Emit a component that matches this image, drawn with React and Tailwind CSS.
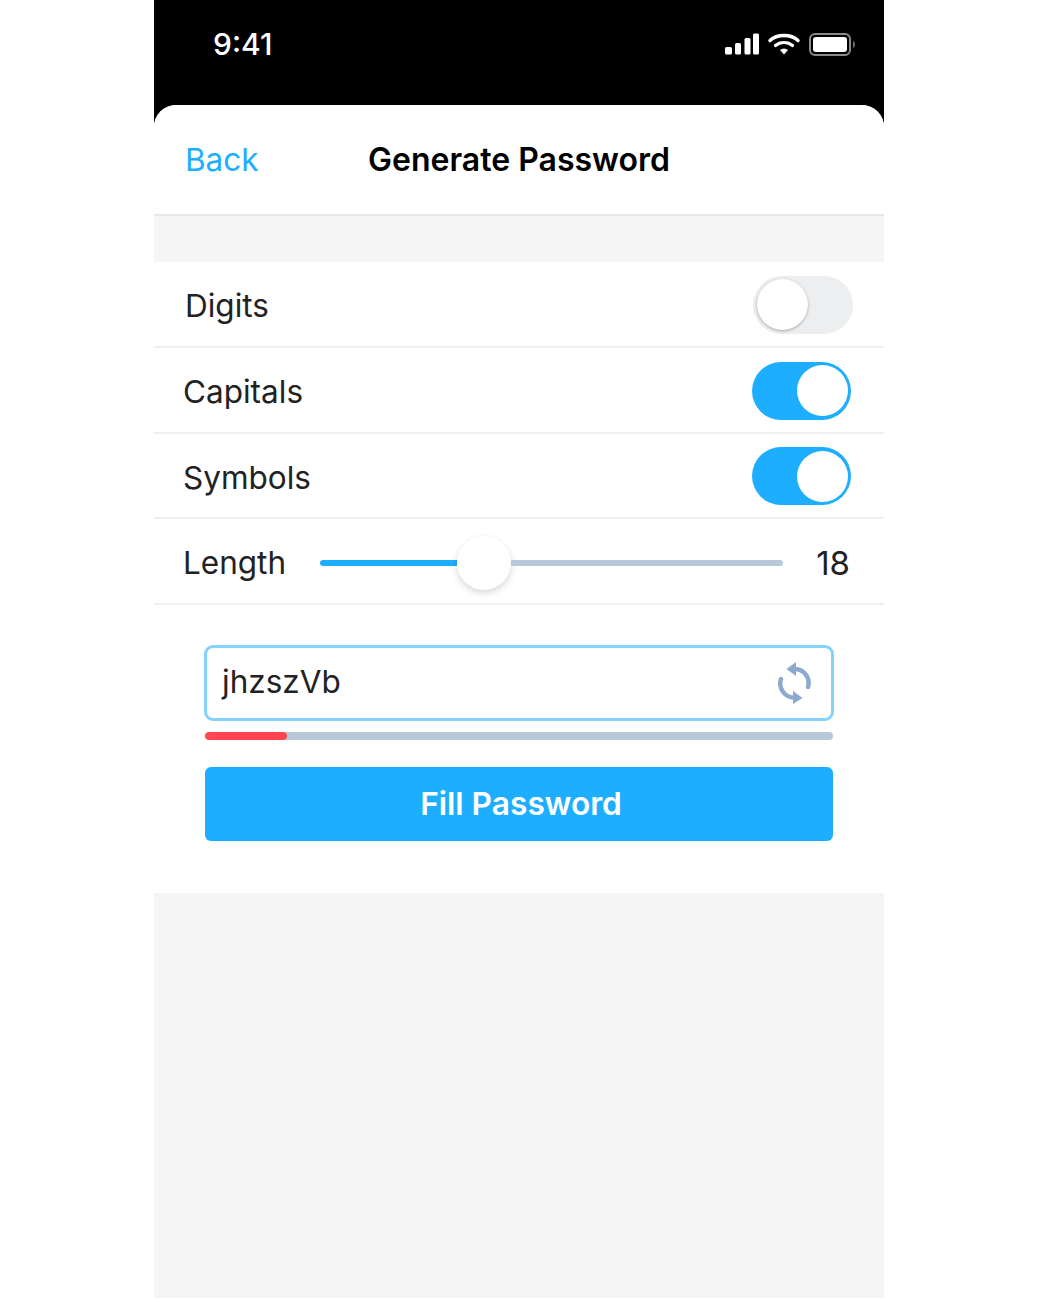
import React from "react";

const font = { fontFamily: '"Inter", "Liberation Sans", sans-serif' };

function StatusIcons() {
  return (
    <svg width="132" height="24" viewBox="0 0 132 24" fill="none">
      <rect x="0" y="14" width="7" height="7.5" rx="1.5" fill="#fff" />
      <rect x="10" y="10" width="6" height="11.5" rx="1.5" fill="#fff" />
      <rect x="19.5" y="5" width="6" height="16.5" rx="1.5" fill="#fff" />
      <rect x="28" y="0.5" width="6" height="21" rx="1.5" fill="#fff" />
      <path d="M45 7.5 C52 0.8 66 0.8 73 7.5" stroke="#fff" strokeWidth="3.4" strokeLinecap="round" />
      <path d="M50.5 12.5 C55 8.5 63 8.5 67.5 12.5" stroke="#fff" strokeWidth="3.2" strokeLinecap="round" />
      <path d="M55 17 L59 21.5 L63 17 C60.5 15 57.5 15 55 17 Z" fill="#fff" />
      <rect x="85" y="1" width="40" height="21" rx="5" stroke="#8a8a8a" strokeWidth="2" />
      <rect x="88" y="4" width="34" height="15" rx="3" fill="#fff" />
      <path d="M128 8 C130.5 9 130.5 14 128 15 Z" fill="#777" />
    </svg>
  );
}

function SyncIcon() {
  return (
    <svg width="33" height="42" viewBox="0 0 33 42" fill="none">
      <path d="M8.5 7 L18 0 L18 14 Z" fill="#8ca9cf" />
      <path d="M16 7 A14 14 0 0 1 30 25" stroke="#8ca9cf" strokeWidth="4.4" strokeLinecap="round" />
      <path d="M24.5 36 L15 29 L15 42 Z" fill="#8ca9cf" />
      <path d="M17 35.5 A14 14 0 0 1 3 17" stroke="#8ca9cf" strokeWidth="4.4" strokeLinecap="round" />
    </svg>
  );
}

function Toggle({ on }) {
  if (on) {
    return (
      <div className="w-[99px] h-[58px] rounded-full bg-[#1eaeff] flex items-center justify-end pr-[3px]">
        <div className="w-[51px] h-[51px] rounded-full bg-white" />
      </div>
    );
  }
  return (
    <div className="w-[100px] h-[58px] rounded-full bg-[#eceef0] flex items-center pl-[4px]">
      <div className="w-[51px] h-[51px] rounded-full bg-white shadow-[0_1px_3px_rgba(0,0,0,0.3)]" />
    </div>
  );
}

function Row({ label, on, left, right }) {
  return (
    <div className={`h-[85.75px] pt-[2px] border-b-2 border-[#f0f0f0] flex items-center justify-between ${left} ${right}`}>
      <span className="pt-[2px] text-[31.5px] text-[#222] leading-none">{label}</span>
      <Toggle on={on} />
    </div>
  );
}

export default function App() {
  return (
    <div className="bg-white w-[1040px] h-[1300px]" style={font}>
      <div className="ml-[154px] w-[730px] h-[1298px] bg-black flex flex-col">
        <div className="h-[105px] shrink-0 flex items-start justify-between pl-[59px] pr-[24px] pt-[26px]">
          <span className="text-[30px] leading-[36px] font-medium text-white">9:41</span>
          <div className="pt-[7px] pr-[3px]"><StatusIcons /></div>
        </div>
        <div className="flex-1 rounded-t-[22px] bg-[#f5f5f5] flex flex-col overflow-hidden">
          <div className="h-[111px] shrink-0 bg-white border-b-2 border-[#e8e8e8] flex items-center pl-[31px]">
            <span className="w-[183px] text-[31.5px] leading-none text-[#1eaeff]">Back</span>
            <span className="text-[32px] leading-none font-semibold text-black">Generate Password</span>
          </div>
          <div className="h-[46px] shrink-0" />
          <div className="bg-white shrink-0">
            <Row label="Digits" on={false} left="pl-[31px]" right="pr-[31px]" />
            <Row label="Capitals" on left="pl-[29px]" right="pr-[33px]" />
            <Row label="Symbols" on left="pl-[29px]" right="pr-[33px]" />
            <div className="h-[85.75px] pt-[3px] border-b-2 border-[#f0f0f0] flex items-center pl-[29px] pr-[34px]">
              <span className="w-[137px] pt-[1px] text-[31.5px] text-[#222] leading-none">Length</span>
              <div className="flex items-center w-[463px]">
                <div className="w-[137px] h-[6px] rounded-l-full bg-[#1eaeff]" />
                <div className="w-[54px] h-[54px] rounded-full bg-white shadow-[0_3px_7px_rgba(0,0,0,0.16)] shrink-0" />
                <div className="flex-1 h-[6px] rounded-r-full bg-[#b8c7d9]" />
              </div>
              <span className="ml-auto pt-[1px] text-[33px] text-[#222] leading-none">18</span>
            </div>
            <div className="h-[288px] pt-[40px] pl-[50px] pr-[50px]">
              <div className="h-[76px] border-[3px] border-[#84d2fe] rounded-[9px] flex items-center justify-between pl-[15px] pr-[20px]">
                <span className="pb-[2px] text-[31.5px] leading-none text-[#222]">jhzszVb</span>
                <SyncIcon />
              </div>
              <div className="mt-[11px] mx-[1px] h-[8px] rounded-full bg-[#b8c7d9] overflow-hidden">
                <div className="w-[82px] h-full rounded-full bg-[#ff4650]" />
              </div>
              <div className="mt-[27px] mx-[1px] h-[74px] rounded-[6px] bg-[#1eaeff] flex items-center justify-center">
                <span className="text-[31.7px] leading-none font-semibold text-white ml-[4px]">Fill Password</span>
              </div>
            </div>
          </div>
          <div className="flex-1 bg-[#f5f5f5]" />
        </div>
      </div>
    </div>
  );
}
